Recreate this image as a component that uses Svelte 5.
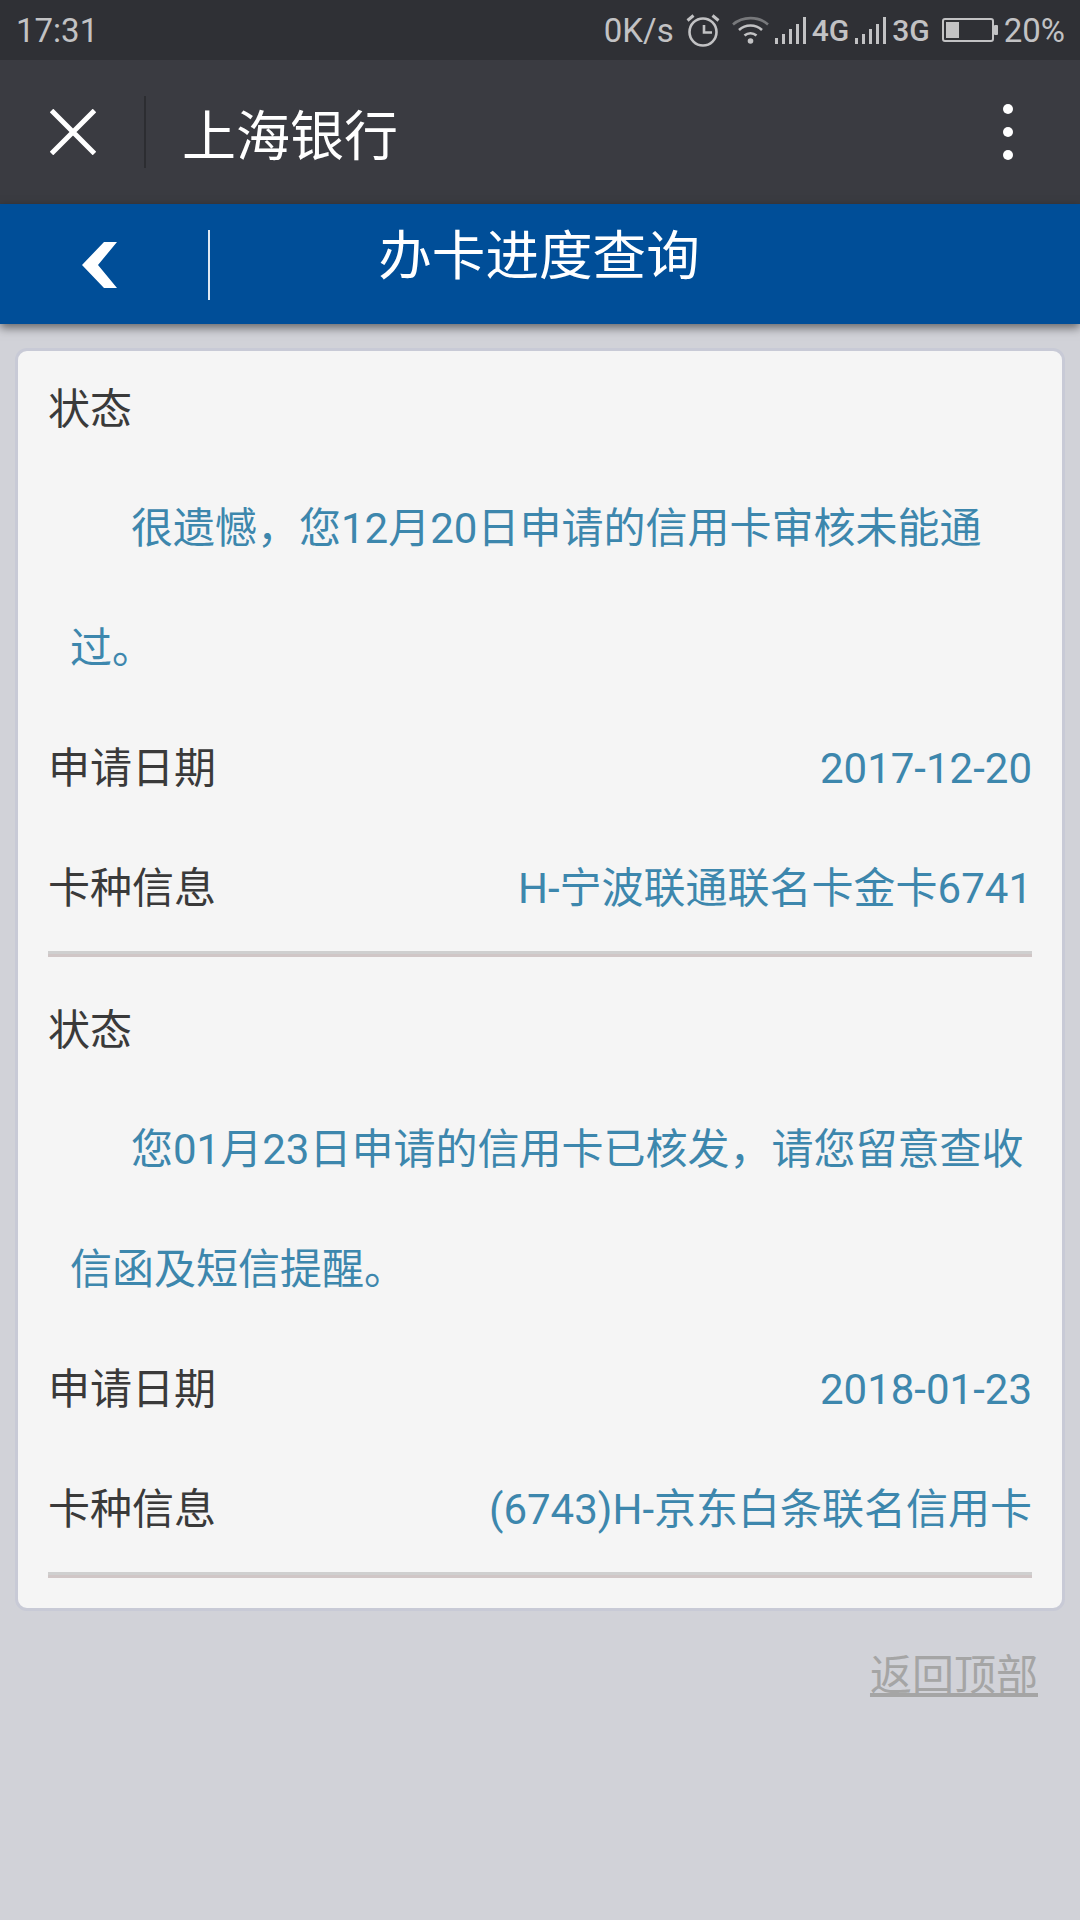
<script lang="ts">
  const records = [
    {
      status: '很遗憾，您12月20日申请的信用卡审核未能通过。',
      date: '2017-12-20',
      card: 'H-宁波联通联名卡金卡6741',
    },
    {
      status: '您01月23日申请的信用卡已核发，请您留意查收信函及短信提醒。',
      date: '2018-01-23',
      card: '(6743)H-京东白条联名信用卡',
    },
  ];
  const bars = [
    { x: 0, h: 6 },
    { x: 7, h: 10 },
    { x: 14, h: 15 },
    { x: 21, h: 20 },
    { x: 28, h: 27 },
  ];
</script>

{#snippet signal()}
  <svg class="signal" width="31" height="28" viewBox="0 0 31 28">
    {#each bars as bar}
      <rect x={bar.x} y={28 - bar.h} width="3" height={bar.h} fill="#c2c2c4" />
    {/each}
  </svg>
{/snippet}

<div class="page">
  <div class="status">
    <span class="time">17:31</span>
    <div class="indicators">
      <span class="speed">0K/s</span>
      <svg class="alarm" width="34" height="34" viewBox="0 0 34 34" fill="none" stroke="#c2c2c4">
        <circle cx="17" cy="18" r="13.5" stroke-width="2.6" />
        <path d="M18 11v7.500h8" stroke-width="2.600" />
        <path d="M1.500 6.500L7.500 1.500M32.500 6.500L26.500 1.500" stroke-width="3" />
      </svg>
      <svg class="wifi" width="37" height="30" viewBox="0 0 37 30" fill="none">
        <path d="M1 9.500C10.500 1 26.500 1 36 9.500" stroke="#77787b" stroke-width="2.600" />
        <path d="M7 15C13.500 9 23.500 9 30 15" stroke="#c2c2c4" stroke-width="2.600" />
        <path d="M12.500 20.500C16 17.500 21 17.500 24.500 20.500" stroke="#c2c2c4" stroke-width="2.600" />
        <circle cx="18.500" cy="26" r="2.800" fill="#c2c2c4" />
      </svg>
      {@render signal()}
      <span class="net">4G</span>
      {@render signal()}
      <span class="net">3G</span>
      <svg class="battery" width="56" height="24" viewBox="0 0 56 24">
        <rect x="1" y="1" width="50" height="22" rx="2" fill="none" stroke="#c2c2c4" stroke-width="2" />
        <rect x="4" y="4" width="13" height="16" fill="#c2c2c4" />
        <rect x="52" y="7" width="4" height="10" rx="1" fill="#c2c2c4" />
      </svg>
      <span class="level">20%</span>
    </div>
  </div>

  <nav class="nav">
    <button class="close" aria-label="关闭">
      <svg width="46" height="46" viewBox="0 0 46 46">
        <path d="M1.500 1.500L44.500 44.500M44.500 1.500L1.500 44.500" stroke="#fff" stroke-width="5" />
      </svg>
    </button>
    <span class="nav-title">上海银行</span>
    <div class="dots">
      <i></i>
      <i></i>
      <i></i>
    </div>
  </nav>

  <header class="header">
    <button class="back" aria-label="返回">
      <svg class="chevron" width="36" height="46" viewBox="0 0 36 46">
        <path d="M22 0H35L16 23L35 46H22L0 23Z" fill="#fff" />
      </svg>
    </button>
    <h1>办卡进度查询</h1>
  </header>

  <main class="card">
    {#each records as record}
      <section class="record">
        <div class="label state">状态</div>
        <p class="message">{record.status}</p>
        <div class="row">
          <span class="label">申请日期</span>
          <span class="value">{record.date}</span>
        </div>
        <div class="row">
          <span class="label">卡种信息</span>
          <span class="value">{record.card}</span>
        </div>
        <div class="rule"></div>
      </section>
    {/each}
  </main>

  <div class="footer">
    <a href="#top">返回顶部</a>
  </div>
</div>

<style>
  :global(body) {
    margin: 0;
    background: #d1d2d8;
  }

  .page {
    width: 1080px;
    height: 1920px;
    overflow: hidden;
    background: #d1d2d8;
    font-family: Roboto, 'Noto Sans CJK SC', sans-serif;
  }

  .status {
    height: 60px;
    display: flex;
    align-items: center;
    justify-content: space-between;
    padding: 0 15px 0 16px;
    background: #2f3035;
    color: #c2c2c4;
    font-size: 33px;
  }

  .indicators {
    display: flex;
    align-items: center;
  }

  .alarm {
    margin-left: 12px;
    margin-top: 1px;
  }

  .wifi {
    margin-left: 12px;
    margin-right: 6px;
    margin-top: -1px;
  }

  .net {
    font-size: 30px;
    font-weight: 500;
    margin: 0 6px;
  }

  .battery {
    margin-left: 6px;
    margin-right: 6px;
  }

  .nav {
    height: 144px;
    display: flex;
    align-items: center;
    background: #3a3b41;
    color: #fff;
  }

  .close {
    width: 146px;
    height: 72px;
    padding: 0 0 0 2px;
    border: 0;
    border-right: 2px solid #2c2d31;
    background: none;
    display: flex;
    align-items: center;
    justify-content: center;
    box-sizing: border-box;
  }

  .nav-title {
    margin-left: 36px;
    font-size: 54px;
  }

  .dots {
    margin-left: auto;
    margin-right: 67px;
    display: flex;
    flex-direction: column;
    gap: 13px;
  }

  .dots i {
    display: block;
    width: 10px;
    height: 10px;
    border-radius: 50%;
    background: #fff;
  }

  .header {
    position: relative;
    height: 120px;
    display: flex;
    align-items: center;
    background: #004e98;
    box-shadow: 0 4px 9px rgba(0, 0, 0, 0.5);
  }

  .back {
    width: 210px;
    height: 70px;
    margin-top: 2px;
    padding: 0 8px 0 0;
    border: 0;
    border-right: 2px solid #dfe8f2;
    background: none;
    display: flex;
    align-items: center;
    justify-content: center;
    box-sizing: border-box;
  }

  .chevron {
    filter: blur(0.6px);
  }

  h1 {
    position: absolute;
    left: 0;
    right: 2px;
    top: 19px;
    margin: 0;
    text-align: center;
    color: #fff;
    font-size: 53.6px;
    font-weight: 400;
    line-height: 68px;
  }

  .card {
    margin: 24px 15px 0 15px;
    height: 1263px;
    box-sizing: border-box;
    padding: 0 30px;
    background: #f5f5f5;
    border: 3px solid #c8cad6;
    border-radius: 12px;
  }

  .record {
    height: 621px;
  }

  .label {
    color: #3a3a3a;
    font-size: 42px;
  }

  .state {
    height: 118px;
    line-height: 118px;
  }

  .message {
    margin: 0 0 0 22px;
    color: #3d87ad;
    font-size: 42px;
    line-height: 120px;
    text-indent: 61px;
  }

  .row {
    height: 119.5px;
    display: flex;
    justify-content: space-between;
    line-height: 119px;
  }

  .value {
    color: #3d87ad;
    font-size: 42px;
  }

  .rule {
    height: 3px;
    margin-top: 3px;
    background: #cfcfcf;
    border-bottom: 3px solid #d0c6c6;
  }

  .footer {
    margin-top: 30px;
    padding-right: 42px;
    text-align: right;
  }

  .footer a {
    color: #a5a5a5;
    font-size: 42px;
  }
</style>
